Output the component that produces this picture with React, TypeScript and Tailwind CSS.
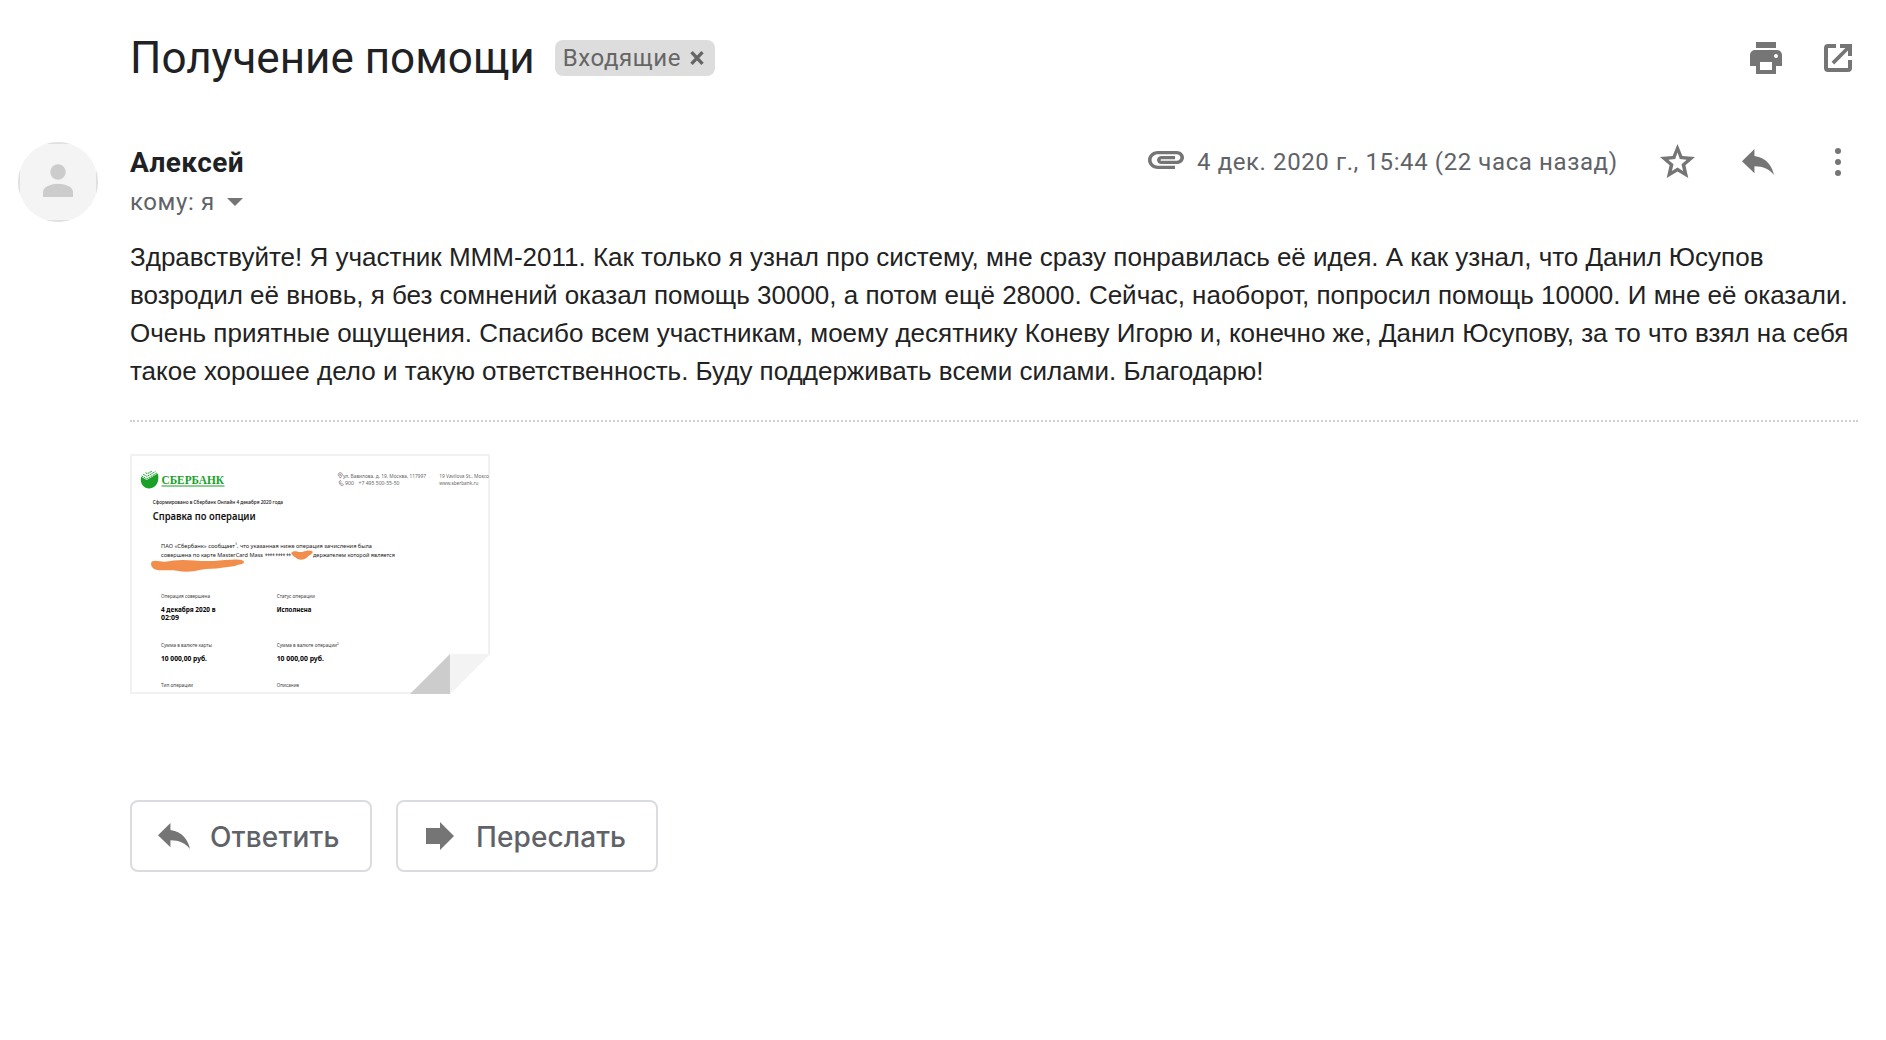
import React from 'react';

const messageLines = [
  'Здравствуйте! Я участник МММ-2011. Как только я узнал про систему, мне сразу понравилась её идея. А как узнал, что Данил Юсупов',
  'возродил её вновь, я без сомнений оказал помощь 30000, а потом ещё 28000. Сейчас, наоборот, попросил помощь 10000. И мне её оказали.',
  'Очень приятные ощущения. Спасибо всем участникам, моему десятнику Коневу Игорю и, конечно же, Данил Юсупову, за то что взял на себя',
  'такое хорошее дело и такую ответственность. Буду поддерживать всеми силами. Благодарю!',
];

export default function App() {
  return (
    <div className="flex h-[1040px] w-[1886px] flex-col overflow-hidden bg-white font-['Roboto',sans-serif]">
      <SubjectBar />
      <div className="flex pl-[18px]">
        <Avatar />
        <div className="ml-8 w-[1728px] pt-1">
          <MessageHeader />
          <div className="mt-[22px] font-['Liberation_Sans',Arial,sans-serif] text-[26px] leading-[38px] text-[#222]">
            {messageLines.map((line) => (
              <p key={line} className="whitespace-nowrap">{line}</p>
            ))}
          </div>
          <div className="mt-[30px] border-t-2 border-dotted border-[#d0d0d0]" />
          <div className="mt-8">
            <AttachmentPreview />
          </div>
          <div className="mt-[106px] flex gap-6">
            <button className="flex h-[72px] w-[242px] items-center rounded-lg border-2 border-[#dadce0] pl-[26px]">
              <ReplyIcon />
              <span className="ml-5 mt-px font-['Inter',sans-serif] text-[28px] font-medium leading-8 tracking-[0.2px] text-[#5f6368]">Ответить</span>
            </button>
            <button className="flex h-[72px] w-[262px] items-center rounded-lg border-2 border-[#dadce0] pl-7">
              <svg width="28" height="28" viewBox="0 0 28 28" className="fill-[#757575]">
                <path d="M0 6h14V0l14 14-14 14v-6H0z" />
              </svg>
              <span className="ml-[22px] mt-px font-['Inter',sans-serif] text-[28px] font-medium leading-8 tracking-[0.1px] text-[#5f6368]">Переслать</span>
            </button>
          </div>
        </div>
      </div>
    </div>
  );
}

function SubjectBar() {
  return (
    <header className="flex h-[142px] items-start pl-[130px] pr-[34px] pt-[30px]">
      <h1 className="text-[44px] font-normal leading-[56px] text-[#202124]">Получение помощи</h1>
      <div className="ml-5 mt-[10px] flex h-9 w-40 items-center rounded-lg bg-[#ddd] pl-2 text-2xl leading-7 tracking-[0.6px] text-[#666]">
        <span>Входящие</span>
        <svg width="14" height="14" viewBox="0 0 14 14" className="ml-[9px] fill-none stroke-[#666]" strokeWidth="3.4">
          <path d="M1.5 1.2l11 11.6M12.5 1.2l-11 11.6" />
        </svg>
      </div>
      <div className="ml-auto mt-3 flex items-center gap-[42px]">
        {/* Print */}
        <svg width="32" height="32" viewBox="0 0 32 32" className="fill-[#757575]">
          <path d="M6 0h20v6H6z" />
          <path
            fillRule="evenodd"
            d="M27 8H5a5 5 0 0 0-5 5v11h6v8h20v-8h6V13a5 5 0 0 0-5-5zM10 20h12v8H10zM26 12a2 2 0 1 1 0 4 2 2 0 0 1 0-4z"
          />
        </svg>
        {/* Open in new window */}
        <svg width="28" height="28" viewBox="0 0 28 28" className="fill-[#757575]">
          <path d="M12 0H4a4 4 0 0 0-4 4v20a4 4 0 0 0 4 4h20a4 4 0 0 0 4-4v-8h-4v8H4V4h8z" />
          <path d="M16 0h12v12h-4V6.6L10.2 20.4l-2.6-2.6L21.4 4H16z" />
        </svg>
      </div>
    </header>
  );
}

function Avatar() {
  return (
    <div className="h-20 w-20 shrink-0 overflow-hidden rounded-full">
      <div className="h-20 w-20 border-2 border-[#e0e0e0] bg-[#f4f4f4]">
        <svg width="76" height="76" viewBox="2 2 76 76" className="fill-[#ccc]">
          <circle cx="40" cy="30" r="7.7" />
          <path d="M25 55v-5c0-5.2 8-8.2 15-8.2s15 3 15 8.2v5z" />
        </svg>
      </div>
    </div>
  );
}

function MessageHeader() {
  return (
    <div className="flex h-[70px] items-start justify-between">
      <div>
        <div className="pt-px text-[28px] font-bold leading-8 tracking-[0.4px] text-[#202124]">Алексей</div>
        <div className="mt-[9px] flex items-center text-2xl leading-7 tracking-[0.6px] text-[#5f6368]">
          <span>кому: я</span>
          <svg width="16" height="8" viewBox="0 0 16 8" className="ml-3 fill-[#757575]">
            <path d="M0 0h16L8 8z" />
          </svg>
        </div>
      </div>
      <div className="flex h-8 items-center pr-[17px]">
        <svg width="36" height="18" viewBox="2 7 20 11" preserveAspectRatio="none" className="-mt-1 fill-[#757575]">
          <path d="M2 12.5C2 9.46 4.46 7 7.5 7H18c2.21 0 4 1.79 4 4s-1.79 4-4 4H9.5C8.12 15 7 13.88 7 12.5S8.12 10 9.5 10H17v2H9.41c-.55 0-.55 1 0 1H18c1.1 0 2-.9 2-2s-.9-2-2-2H7.5C5.57 9 4 10.57 4 12.5S5.57 16 7.5 16H17v2H7.5C4.46 18 2 15.54 2 12.5z" />
        </svg>
        <span className="ml-[13px] w-[420px] whitespace-nowrap text-2xl leading-7 tracking-[0.6px] text-[#5f6368]">4 дек. 2020 г., 15:44 (22 часа назад)</span>
        <svg width="35" height="34" viewBox="0 0 35 34" className="ml-[43px] mr-px -mt-0.5 fill-[#757575]">
          <path
            fillRule="evenodd"
            d="M17.500 0l4.900 11.900L35 13l-9.600 8.200L28.300 34l-10.800-6.600L6.700 34l2.900-12.800L0 13l12.600-1.100zM17.500 8.600l-2.300 6.500-6.900.6 5.200 4.500-1.600 6.800 5.600-3.500 5.600 3.500-1.600-6.800 5.200-4.500-6.900-.6z"
          />
        </svg>
        <span className="ml-[46px] flex"><ReplyIcon /></span>
        <svg width="6" height="28" viewBox="0 0 6 28" className="ml-[61px] fill-[#757575]">
          <circle cx="3" cy="3" r="3" />
          <circle cx="3" cy="14" r="3" />
          <circle cx="3" cy="25" r="3" />
        </svg>
      </div>
    </div>
  );
}

function ReplyIcon() {
  return (
    <svg width="32" height="26" viewBox="3 5 18 15" preserveAspectRatio="none" className="fill-[#757575]">
      <path d="M10 9V5l-7 7 7 7v-4.1c5 0 8.5 1.6 11 5.1-1-5-4-10-11-11z" />
    </svg>
  );
}

interface DocText {
  x: number;
  y: number;
  width: number;
  size: number;
  text: string;
  weight?: number;
  fill?: string;
}

// Lines of the scanned statement, in thumbnail pixels
const docTexts: DocText[] = [
  { x: 213, y: 23.7, width: 83, size: 5.2, text: 'ул. Вавилова, д. 19, Москва, 117997', fill: '#666' },
  { x: 215, y: 31, width: 9, size: 5.2, text: '900', fill: '#666' },
  { x: 228.5, y: 31, width: 41, size: 5.2, text: '+7 495 500-55-50', fill: '#666' },
  { x: 309.3, y: 23.7, width: 49.7, size: 5.2, text: '19 Vavilova St., Mosco', fill: '#666' },
  { x: 309.3, y: 31, width: 39, size: 5.2, text: 'www.sberbank.ru', fill: '#666' },
  { x: 22.7, y: 49.7, width: 130.3, size: 5.4, text: 'Сформировано в Сбербанк Онлайн 4 декабря 2020 года', weight: 500, fill: '#111' },
  { x: 22.7, y: 65.5, width: 103, size: 9.8, text: 'Справка по операции', weight: 600, fill: '#111' },
  { x: 31, y: 94, width: 211, size: 6, text: 'ПАО «Сбербанк» сообщает¹, что указанная ниже операция зачисления была' },
  { x: 31, y: 103.3, width: 102, size: 6, text: 'совершена по карте MasterCard Mass' },
  { x: 135, y: 104.3, width: 26, size: 7, text: '**** **** **' },
  { x: 183, y: 103.3, width: 82, size: 6, text: 'держателем которой является' },
  { x: 31, y: 143.7, width: 49, size: 5, text: 'Операция совершена', fill: '#444' },
  { x: 146.7, y: 143.7, width: 38.3, size: 5, text: 'Статус операции', fill: '#444' },
  { x: 31, y: 157.5, width: 54.5, size: 6.2, text: '4 декабря 2020 в', weight: 700, fill: '#000' },
  { x: 31, y: 165.8, width: 18, size: 6.2, text: '02:09', weight: 700, fill: '#000' },
  { x: 146.7, y: 157.5, width: 34.6, size: 6.2, text: 'Исполнена', weight: 700, fill: '#000' },
  { x: 31, y: 192.5, width: 51, size: 5, text: 'Сумма в валюте карты', fill: '#444' },
  { x: 146.7, y: 192.5, width: 62, size: 5, text: 'Сумма в валюте операции²', fill: '#444' },
  { x: 31, y: 206.5, width: 46, size: 6.2, text: '10 000,00 руб.', weight: 700, fill: '#000' },
  { x: 146.7, y: 206.5, width: 47.3, size: 6.2, text: '10 000,00 руб.', weight: 700, fill: '#000' },
  { x: 31, y: 232.8, width: 32, size: 5, text: 'Тип операции', fill: '#444' },
  { x: 146.7, y: 232.8, width: 22.5, size: 5, text: 'Описание', fill: '#444' },
];

function AttachmentPreview() {
  return (
    <svg width="360" height="240" viewBox="0 0 360 240" className="block font-['Noto_Sans',sans-serif]">
      <path d="M1 1h358v199l-39 39H1z" fill="#fff" stroke="#f1f1f1" strokeWidth="2" />

      {/* Bank logo */}
      <g transform="translate(.7 .3)">
        <path d="M10.6 22.5l5.4 3.2 11-6.4c.6 1.4.9 3.4.5 6.2-.6 5-4.4 8.7-9 8.7-5.2 0-8.600-4.400-8.400-9.200.1-1 .2-1.800.5-2.500z" fill="#1a9f29" />
        <path
          d="M11 21.600l5 3 10.500-6M12.500 19.900l3.700 2.200 8.500-4.800M14.800 18.400l1.700 1 5-2.700"
          fill="none"
          stroke="#1a9f29"
          strokeWidth="1"
          strokeDasharray="2 .6"
        />
      </g>
      <text
        x="31.5"
        y="29.6"
        textLength="62.5"
        lengthAdjust="spacingAndGlyphs"
        fontSize="12.8"
        fontWeight="700"
        fill="#1a9f29"
        className="font-['Liberation_Serif',serif]"
      >
        СБЕРБАНК
      </text>
      <path d="M31.5 32h63" stroke="#1a9f29" strokeWidth="1" />

      {/* Address pin and phone */}
      <g fill="none" stroke="#777" strokeWidth=".7">
        <path d="M210.300 24.200l-1.400-2.200a2 2 0 1 1 2.800 0z" />
        <circle cx="210.3" cy="20.7" r=".7" />
        <path d="M209.500 27c-1 2 .5 4.600 3.200 4.600l.8-1-1.300-1-1 .4c-.6-.4-.9-1-.9-1.600l.7-.7-.5-1.200z" />
      </g>

      {docTexts.map((item, index) => (
        <text
          key={index}
          x={item.x}
          y={item.y}
          fontSize={item.size}
          fontWeight={item.weight ?? 400}
          fill={item.fill ?? '#222'}
          textLength={item.width}
          lengthAdjust="spacingAndGlyphs"
        >
          {item.text}
        </text>
      ))}

      {/* Marker strokes over the card holder data */}
      <path
        d="M22 107.500c4-2 8 .5 13 .2l9-1.200c12-1.600 22 .8 34 .6 9-.2 16-1.700 24-1.400 5-.6 12-.2 12 2.300 0 2.400-5 2.400-8 3.400-3 1.400-9 1.200-14 2.300-8 1.400-14 .6-21 2-8 2.200-17 2.600-24 1-8-1.400-15 .4-21-1-5-1.400-6-6.500-4-8.200z"
        fill="#f28e4c"
      />
      <path d="M161.500 98.500c3-2.800 7 .2 11-.6 4-1.300 8-2 10-.4 1 2-3 3.500-5 5.500-3 3-8 3.500-11 1.200-2-1.500-6-3.500-5-5.700z" fill="#f28e4c" />

      {/* Folded corner */}
      <path d="M320 240l40-40v40z" fill="#fff" />
      <path d="M320 200v40h-40z" fill="#ccc" />
      <path d="M320 200h40l-40 40z" fill="#f3f3f3" />
    </svg>
  );
}
